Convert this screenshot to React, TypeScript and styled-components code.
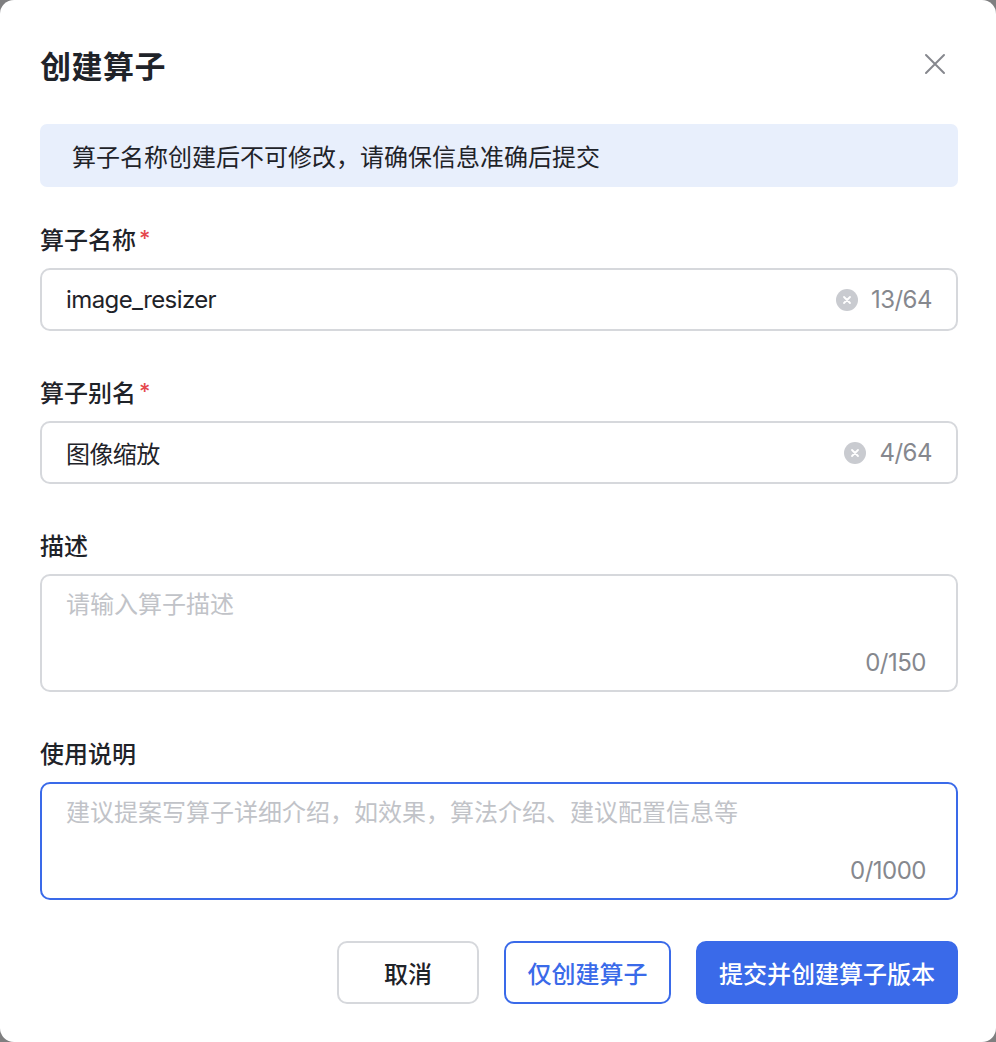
import React from 'react';
import styled, {createGlobalStyle} from 'styled-components';

const FONT = `Inter, "Noto Sans CJK SC", sans-serif`;
const PRIMARY = '#3a6ae9';

const GlobalStyle = createGlobalStyle`
  html, body {
    margin: 0;
    padding: 0;
    background: #7f7f80;
  }
  * {
    box-sizing: border-box;
  }
`

const Modal = styled.div`
  width: 996px;
  height: 1042px;
  background: #fff;
  border-radius: 14px;
  padding: 40px 38px 0 40px;
  font-family: ${FONT};
  color: #1f2329;
  display: flex;
  flex-direction: column;
`

const Header = styled.div`
  display: flex;
  align-items: center;
  justify-content: space-between;
  height: 48px;
  margin-bottom: 36px;
`

const Title = styled.h2`
  margin: 0;
  font-size: 31px;
  font-weight: 600;
  letter-spacing: 0.5px;
`

const CloseButton = styled.button`
  border: none;
  background: none;
  padding: 0;
  margin-right: 10px;
  width: 26px;
  height: 26px;
  display: flex;
  align-items: center;
  justify-content: center;
  cursor: pointer;
`

const Alert = styled.div`
  height: 63px;
  background: #e8effc;
  border-radius: 7px;
  padding: 0 32px;
  display: flex;
  align-items: center;
  font-size: 24px;
  color: #1f2329;
  margin-bottom: 36px;
`

const FormItem = styled.div<{last?: boolean}>`
  margin-bottom: ${({last}) => last ? '41px' : '45px'};
`

const Label = styled.div`
  height: 30px;
  display: flex;
  align-items: center;
  font-size: 24px;
  font-weight: 500;
  margin-bottom: 15px;
`

const Required = styled.span`
  color: #e5484d;
  margin-left: 3px;
  font-size: 22px;
`

const InputWrapper = styled.div<{focused?: boolean}>`
  height: 63px;
  border: 2px solid ${({focused}) => focused ? PRIMARY : '#d6d8dc'};
  border-radius: 10px;
  padding: 0 24px 0 24px;
  display: flex;
  align-items: center;
  gap: 13px;
`

const Input = styled.input`
  flex: 1;
  border: none;
  outline: none;
  font-family: ${FONT};
  font-size: 24px;
  letter-spacing: -0.6px;
  color: #1f2329;
  background: transparent;
  padding: 0;
`

const ClearIcon = styled.span`
  width: 22px;
  height: 22px;
  border-radius: 50%;
  background: #c9cbd0;
  display: flex;
  align-items: center;
  justify-content: center;
`

const Count = styled.span`
  font-size: 24px;
  letter-spacing: -0.5px;
  color: #86888e;
`

const AreaWrapper = styled.div<{focused?: boolean}>`
  height: 118px;
  border: 2px solid ${({focused}) => focused ? PRIMARY : '#d6d8dc'};
  border-radius: 10px;
  padding: 14px 30px 12px 24px;
  display: flex;
  flex-direction: column;
`

const TextArea = styled.textarea`
  flex: 1;
  border: none;
  outline: none;
  resize: none;
  font-family: ${FONT};
  font-size: 24px;
  line-height: 30px;
  padding: 0;
  color: #1f2329;

  &::placeholder {
    color: #c1c3c8;
  }
`

const AreaCount = styled(Count)`
  align-self: flex-end;
  line-height: 30px;
`

const Footer = styled.div`
  display: flex;
  justify-content: flex-end;
  gap: 25px;
`

const Button = styled.button<{variant: 'default' | 'outline' | 'primary', width: number}>`
  width: ${({width}) => width}px;
  height: 63px;
  border-radius: 10px;
  font-family: ${FONT};
  font-size: 24px;
  font-weight: 500;
  cursor: pointer;
  border: 2px solid ${({variant}) => variant === 'default' ? '#d6d8dc' : PRIMARY};
  background: ${({variant}) => variant === 'primary' ? PRIMARY : '#fff'};
  color: ${({variant}) => variant === 'default' ? '#1f2329' : (variant === 'outline' ? PRIMARY : '#fff')};
`

const Clear = () => (
  <ClearIcon>
    <svg width="10" height="10" viewBox="0 0 10 10">
      <path d="M2 2 L8 8 M8 2 L2 8" stroke="#fff" strokeWidth="1.8" strokeLinecap="round"/>
    </svg>
  </ClearIcon>
);

const App = () => {
  return (
    <>
      <GlobalStyle/>
      <Modal>
        <Header>
          <Title>创建算子</Title>
          <CloseButton aria-label="关闭">
            <svg width="24" height="24" viewBox="0 0 24 24">
              <path d="M3 3 L21 21 M21 3 L3 21" stroke="#86888e" strokeWidth="2" strokeLinecap="round"/>
            </svg>
          </CloseButton>
        </Header>
        <Alert>算子名称创建后不可修改，请确保信息准确后提交</Alert>

        <FormItem>
          <Label>算子名称<Required>*</Required></Label>
          <InputWrapper>
            <Input defaultValue="image_resizer"/>
            <Clear/>
            <Count>13/64</Count>
          </InputWrapper>
        </FormItem>

        <FormItem>
          <Label>算子别名<Required>*</Required></Label>
          <InputWrapper>
            <Input defaultValue="图像缩放"/>
            <Clear/>
            <Count>4/64</Count>
          </InputWrapper>
        </FormItem>

        <FormItem>
          <Label>描述</Label>
          <AreaWrapper>
            <TextArea placeholder="请输入算子描述"/>
            <AreaCount>0/150</AreaCount>
          </AreaWrapper>
        </FormItem>

        <FormItem last>
          <Label>使用说明</Label>
          <AreaWrapper focused>
            <TextArea placeholder="建议提案写算子详细介绍，如效果，算法介绍、建议配置信息等"/>
            <AreaCount>0/1000</AreaCount>
          </AreaWrapper>
        </FormItem>

        <Footer>
          <Button variant="default" width={142}>取消</Button>
          <Button variant="outline" width={167}>仅创建算子</Button>
          <Button variant="primary" width={262}>提交并创建算子版本</Button>
        </Footer>
      </Modal>
    </>
  );
};

export default App;
